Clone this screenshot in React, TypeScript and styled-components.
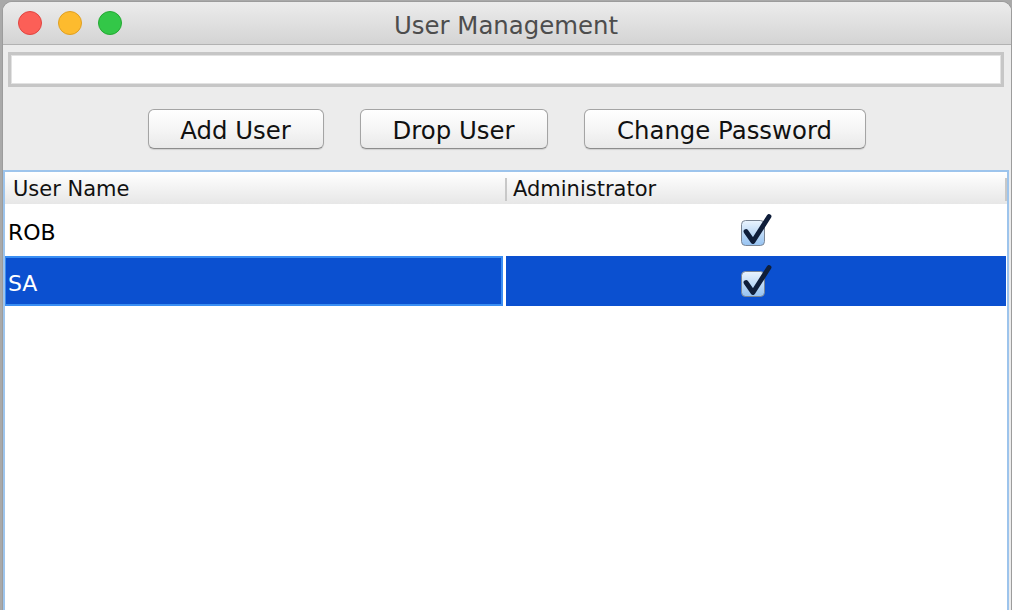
import React from "react";
import styled, { createGlobalStyle } from "styled-components";

const Global = createGlobalStyle`
  html, body { margin: 0; padding: 0; }
  body {
    background: #a9a9a9;
    font-family: "DejaVu Sans", "Liberation Sans", sans-serif;
    overflow: hidden;
  }
`;

const Desk = styled.div`
  width: 1012px;
  height: 610px;
  padding: 2px 1px 0 3px;
  box-sizing: border-box;
  display: flex;
`;

const Window = styled.div`
  flex: 1;
  display: flex;
  flex-direction: column;
  background: #ececec;
  border-radius: 9px 9px 0 0;
  overflow: hidden;
  box-shadow: 0 0 0 1px #9c9c9c;
`;

const TitleBar = styled.div`
  height: 42px;
  display: grid;
  grid-template-columns: 1fr auto 1fr;
  align-items: center;
  background: linear-gradient(#ececec, #d4d4d4);
  border-bottom: 1px solid #b2b2b2;
  padding-left: 15px;
`;

const Lights = styled.div`
  display: flex;
  gap: 16px;
`;

const Light = styled.span<{ $fill: string; $edge: string }>`
  width: 24px;
  height: 24px;
  border-radius: 50%;
  box-sizing: border-box;
  background: ${(p) => p.$fill};
  border: 1px solid ${(p) => p.$edge};
`;

const Title = styled.div`
  font-size: 24.4px;
  color: #4d4d4d;
  padding: 5px 17px 0 0;
`;

const Field = styled.div`
  margin: 7px 7px 0 5px;
  height: 35px;
  box-sizing: border-box;
  background: #fff;
  border: 3px solid #c6c6c6;
  box-shadow: inset 0 0 0 1px #e2e2e2;
`;

const ButtonRow = styled.div`
  display: flex;
  justify-content: center;
  gap: 36px;
  margin-top: 22px;
  padding-right: 1px;
`;

const Button = styled.button<{ $w: number }>`
  width: ${(p) => p.$w}px;
  height: 40px;
  font-family: "DejaVu Sans", "Liberation Sans", sans-serif;
  font-size: 24.4px;
  color: #111;
  background: linear-gradient(#ffffff, #f3f3f3 60%, #e9e9e9);
  border: 1px solid #a4a4a4;
  border-bottom-color: #8c8c8c;
  border-radius: 6px;
  box-shadow: 0 1px 1px rgba(0, 0, 0, 0.12);
  padding: 2px 0 0;
`;

const Pane = styled.div`
  flex: 1;
  margin: 21px 2px 0 0;
  border: 2px solid #9dc4ec;
  border-bottom: none;
  background: #fff;
  display: flex;
  flex-direction: column;
`;

const Header = styled.div`
  display: grid;
  grid-template-columns: 500px 1fr 2px;
  height: 32px;
  background: linear-gradient(#ffffff, #f4f4f4 45%, #e7e7e7);
  margin-bottom: 1px;
`;

const HeadCell = styled.div<{ $sep?: boolean }>`
  position: relative;
  font-size: 21px;
  color: #111;
  display: flex;
  align-items: center;
  padding-left: 8px;
  padding-top: 2px;
  &::before {
    content: "";
    display: ${(p) => (p.$sep ? "block" : "none")};
    position: absolute;
    left: 0;
    top: 6px;
    bottom: 3px;
    width: 2px;
    background: #c8c8c8;
  }
`;

const EndSep = styled.div`
  margin: 6px 0 3px;
  background: #c8c8c8;
`;

const Row = styled.div`
  display: grid;
  grid-template-columns: 498px 1fr;
  column-gap: 3px;
  height: 51px;
  padding-right: 1px;
`;

const NameCell = styled.div<{ $sel?: boolean }>`
  font-size: 22px;
  display: flex;
  align-items: center;
  padding: 4px 0 0 2px;
  box-sizing: border-box;
  color: ${(p) => (p.$sel ? "#ffffff" : "#000")};
  background: ${(p) => (p.$sel ? "#0b50d0" : "transparent")};
  border: 2px solid ${(p) => (p.$sel ? "#3a8ef3" : "transparent")};
  border-left-width: 1px;
  margin-bottom: 1px;
`;

const CheckCell = styled.div<{ $sel?: boolean }>`
  display: flex;
  align-items: center;
  justify-content: center;
  padding-top: 1px;
  background: ${(p) => (p.$sel ? "#0b50d0" : "transparent")};
  margin-bottom: 1px;
`;

const Check = () => (
  <svg width="31" height="33" viewBox="0 0 31 33">
    <defs>
      <linearGradient id="cbg" x1="0" y1="0" x2="0" y2="1">
        <stop offset="0" stopColor="#eaf4fe" />
        <stop offset="0.45" stopColor="#c4ddf7" />
        <stop offset="1" stopColor="#95c2f1" />
      </linearGradient>
    </defs>
    <rect x="0.5" y="6.5" width="23" height="25" rx="4" fill="url(#cbg)" stroke="#7a8594" />
    <path d="M5 17.5 L12 27.5 L28 2.5" fill="none" stroke="#0f1e3a" strokeWidth="4.8" strokeLinecap="round" strokeLinejoin="round" />
  </svg>
);

const users = [
  { name: "ROB", admin: true, sel: false },
  { name: "SA", admin: true, sel: true },
];

export default function App() {
  return (
    <>
      <Global />
      <Desk>
        <Window>
          <TitleBar>
            <Lights>
              <Light $fill="#fc5f57" $edge="#e04541" />
              <Light $fill="#fdbb2e" $edge="#df9f22" />
              <Light $fill="#33c748" $edge="#25a833" />
            </Lights>
            <Title>User Management</Title>
            <div />
          </TitleBar>
          <Field />
          <ButtonRow>
            <Button $w={176}>Add User</Button>
            <Button $w={188}>Drop User</Button>
            <Button $w={282}>Change Password</Button>
          </ButtonRow>
          <Pane>
            <Header>
              <HeadCell>User Name</HeadCell>
              <HeadCell $sep>Administrator</HeadCell>
              <EndSep />
            </Header>
            {users.map((u) => (
              <Row key={u.name}>
                <NameCell $sel={u.sel}>{u.name}</NameCell>
                <CheckCell $sel={u.sel}>{u.admin && <Check />}</CheckCell>
              </Row>
            ))}
          </Pane>
        </Window>
      </Desk>
    </>
  );
}
